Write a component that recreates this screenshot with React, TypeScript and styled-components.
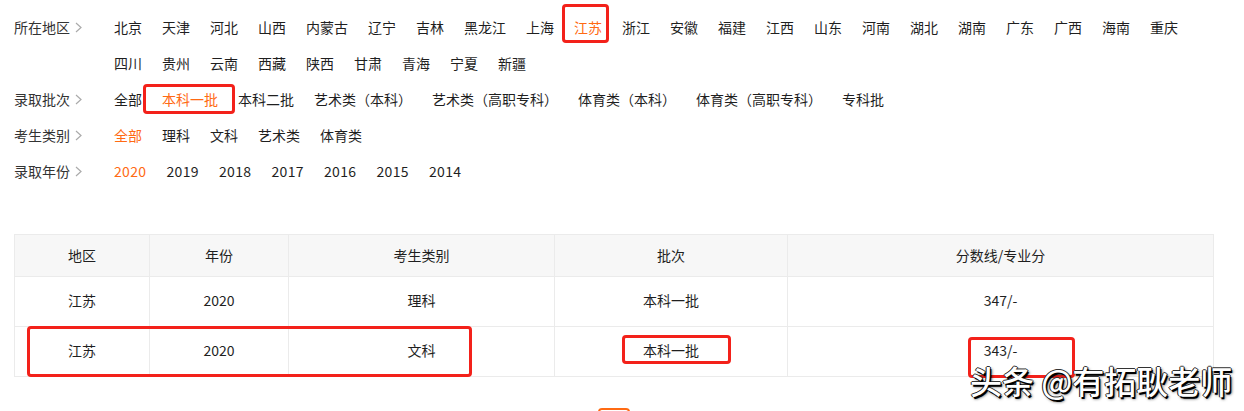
import React from "react";
import styled, { createGlobalStyle } from "styled-components";

const Global = createGlobalStyle`
  html, body { margin: 0; padding: 0; background: #fff; }
  body { font-family: "Noto Sans CJK SC", "Noto Sans", sans-serif; color: #333; }
`;

const ORANGE = "#ff6a13";

const Page = styled.div`
  position: relative;
  width: 1244px;
  height: 411px;
  overflow: hidden;
  padding: 9px 0 0 14px;
  box-sizing: border-box;
`;

const Filters = styled.div`
  display: flex;
  flex-direction: column;
`;

const FilterRow = styled.div`
  display: flex;
  align-items: flex-start;
`;

const Label = styled.div`
  width: 90px;
  flex: none;
  height: 36px;
  display: flex;
  align-items: center;
  font-size: 14px;
  color: #333;
  gap: 5px;
`;

const Options = styled.div`
  width: 1100px;
  display: flex;
  flex-wrap: wrap;
`;

const Option = styled.span<{ $active?: boolean; $numeric?: boolean }>`
  padding: 0 10px;
  height: 36px;
  line-height: 36px;
  font-size: 14px;
  white-space: nowrap;
  letter-spacing: ${(p) => (p.$numeric ? "0.35px" : "0")};
  color: ${(p) => (p.$active ? ORANGE : "#1f1f1f")};
`;

const Table = styled.table`
  margin-top: 45px;
  width: 1199px;
  border-collapse: collapse;
  table-layout: fixed;
  font-size: 14px;
  color: #1f1f1f;
`;

const Th = styled.th`
  height: 39px;
  background: #f7f7f7;
  border: 1px solid #ebebeb;
  font-weight: normal;
  text-align: center;
  padding: 0 0 2px;
`;

const Td = styled.td`
  height: 45px;
  border: 1px solid #ebebeb;
  text-align: center;
  padding: 0 0 4px;
`;

const Pager = styled.div`
  width: 1199px;
  display: flex;
  justify-content: center;
  margin-top: 31px;
`;

const PageButton = styled.div`
  width: 28px;
  height: 28px;
  border: 2px solid ${ORANGE};
  border-radius: 4px;
  color: ${ORANGE};
  font-size: 14px;
  text-align: center;
  line-height: 28px;
`;

const Annotation = styled.div<{ $x: number; $y: number; $w: number; $h: number }>`
  position: absolute;
  left: ${(p) => p.$x}px;
  top: ${(p) => p.$y}px;
  width: ${(p) => p.$w}px;
  height: ${(p) => p.$h}px;
  box-sizing: border-box;
  border: 3px solid #f3211a;
  border-radius: 4px;
  pointer-events: none;
`;

const Watermark = styled.div`
  position: absolute;
  left: 970px;
  top: 363px;
  font-size: 32px;
  line-height: 34px;
  font-weight: 500;
  color: #fff;
  white-space: nowrap;
  text-shadow: 1.5px 1.5px 0 #000, -1px 0 0 #111, 0 -1px 0 #333, 1px 0 0 #111, 2px 2px 3px rgba(0,0,0,0.7);
`;

const Chevron = () => (
  <svg width="7" height="11" viewBox="0 0 7 11">
    <polyline points="1,1 6,5.5 1,10" fill="none" stroke="#aaa" strokeWidth="1.2" />
  </svg>
);

const rows: { label: string; items: string[]; active: string }[] = [
  {
    label: "所在地区",
    items: [
      "北京", "天津", "河北", "山西", "内蒙古", "辽宁", "吉林", "黑龙江", "上海", "江苏", "浙江",
      "安徽", "福建", "江西", "山东", "河南", "湖北", "湖南", "广东", "广西", "海南", "重庆",
      "四川", "贵州", "云南", "西藏", "陕西", "甘肃", "青海", "宁夏", "新疆",
    ],
    active: "江苏",
  },
  {
    label: "录取批次",
    items: ["全部", "本科一批", "本科二批", "艺术类（本科）", "艺术类（高职专科）", "体育类（本科）", "体育类（高职专科）", "专科批"],
    active: "本科一批",
  },
  { label: "考生类别", items: ["全部", "理科", "文科", "艺术类", "体育类"], active: "全部" },
  { label: "录取年份", items: ["2020", "2019", "2018", "2017", "2016", "2015", "2014"], active: "2020" },
];

const data = [
  ["江苏", "2020", "理科", "本科一批", "347/-"],
  ["江苏", "2020", "文科", "本科一批", "343/-"],
];

export default function App() {
  return (
    <>
      <Global />
      <Page>
        <Filters>
          {rows.map((r) => (
            <FilterRow key={r.label}>
              <Label>
                {r.label}
                <Chevron />
              </Label>
              <Options>
                {r.items.map((it) => (
                  <Option key={it} $active={it === r.active} $numeric={/^\d+$/.test(it)}>
                    {it}
                  </Option>
                ))}
              </Options>
            </FilterRow>
          ))}
        </Filters>
        <Table>
          <colgroup>
            <col style={{ width: 135 }} />
            <col style={{ width: 139 }} />
            <col style={{ width: 266 }} />
            <col style={{ width: 233 }} />
            <col style={{ width: 426 }} />
          </colgroup>
          <thead>
            <tr>
              <Th>地区</Th>
              <Th>年份</Th>
              <Th>考生类别</Th>
              <Th>批次</Th>
              <Th>分数线/专业分</Th>
            </tr>
          </thead>
          <tbody>
            {data.map((row, i) => (
              <tr key={i}>
                {row.map((c, j) => (
                  <Td key={j}>{c}</Td>
                ))}
              </tr>
            ))}
          </tbody>
        </Table>
        <Pager>
          <PageButton>1</PageButton>
        </Pager>
        <Annotation $x={562} $y={4} $w={47} $h={39} />
        <Annotation $x={143} $y={84} $w={92} $h={30} />
        <Annotation $x={27} $y={326} $w={445} $h={51} />
        <Annotation $x={622} $y={335} $w={109} $h={29} />
        <Annotation $x={968} $y={337} $w={107} $h={41} />
        <Watermark>头条 @有拓耿老师</Watermark>
      </Page>
    </>
  );
}
